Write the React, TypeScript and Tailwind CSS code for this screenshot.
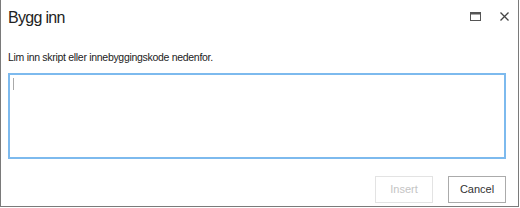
import React from "react";

const MaxIcon = () => (
  <svg width="11" height="9" viewBox="0 0 11 9" fill="none">
    <rect x="0.5" y="0.5" width="10" height="8" stroke="#555" strokeWidth="1" />
    <rect x="0.5" y="0.5" width="10" height="2" fill="#555" />
  </svg>
);

const CloseIcon = () => (
  <svg width="9" height="9" viewBox="0 0 9 9" fill="none">
    <path d="M0.5 0.5 L8.5 8.5 M8.5 0.5 L0.5 8.5" stroke="#444" strokeWidth="1.3" />
  </svg>
);

export default function App() {
  return (
    <div className="w-[520px] h-[208px] bg-white" style={{ fontFamily: "'Liberation Sans', Arial, sans-serif" }}>
      <div className="w-[519px] h-[207px] border-x border-b border-[#7a7a7a] flex flex-col">
        <header className="flex items-start justify-between pl-[7px] pr-[9px] pt-[8px] h-[42px]">
          <h1 className="text-[16px] leading-[20px] tracking-[-0.7px] text-[#222]">Bygg inn</h1>
          <div className="flex items-center gap-[19px] pt-[4px]">
            <MaxIcon />
            <CloseIcon />
          </div>
        </header>
        <main className="pl-[7px] pr-[12px] flex-1 flex flex-col">
          <p className="text-[10.5px] leading-[14px] tracking-[-0.3px] text-[#222] mt-[8px]">
            Lim inn skript eller innebyggingskode nedenfor.
          </p>
          <div className="mt-[9px] h-[86px] border-2 border-[#7dbaee] relative">
            <span className="absolute left-[3px] top-[3px] w-[1px] h-[12px] bg-[#aaa]" />
          </div>
          <div className="flex justify-end gap-[15px] mt-[17px]">
            <button className="w-[58px] h-[27px] border border-[#e3e3e3] text-[11px] text-[#c4c4c4] bg-white">
              Insert
            </button>
            <button className="w-[58px] h-[27px] border border-[#ababab] text-[11px] text-[#333] bg-white">
              Cancel
            </button>
          </div>
        </main>
      </div>
    </div>
  );
}
